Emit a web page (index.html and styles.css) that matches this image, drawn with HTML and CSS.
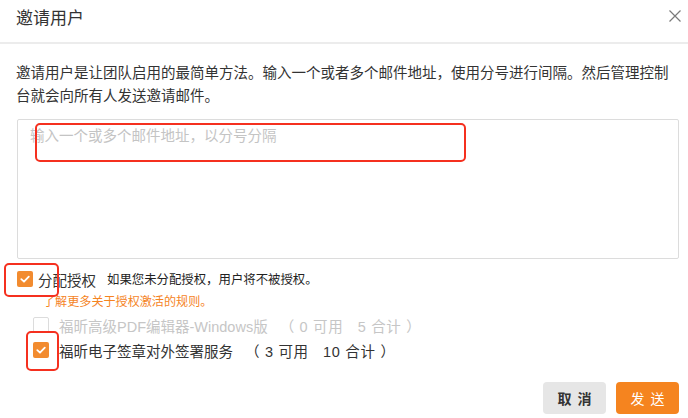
FILE: index.html
```html
<!DOCTYPE html>
<html lang="zh">

<head>
  <meta charset="UTF-8">
  <meta name="viewport" content="width=device-width, initial-scale=1.0">
  <title>邀请用户</title>
  <link rel="stylesheet" href="styles.css">
</head>

<body>
  <div class="dialog">
    <div class="header">
      <h1 class="title">邀请用户</h1>
      <svg class="close" width="12" height="12" viewBox="0 0 12 12">
        <path d="M0.5 0.5 L11.5 11.5 M11.5 0.5 L0.5 11.5" stroke="#7a7a7a" stroke-width="1.2" fill="none" />
      </svg>
    </div>

    <p class="desc">邀请用户是让团队启用的最简单方法。输入一个或者多个邮件地址，使用分号进行间隔。然后管理控制台就会向所有人发送邀请邮件。</p>

    <div class="email-box">
      <textarea class="emails" placeholder="输入一个或多个邮件地址，以分号分隔"></textarea>
      <span class="mark mark-input"></span>
    </div>

    <div class="assign">
      <span class="check on">
        <svg width="16" height="16" viewBox="0 0 16 16"><path d="M4.3 8.2 L7 10.7 L11.8 5.6" stroke="#fff" stroke-width="1.8" fill="none" stroke-linecap="round" stroke-linejoin="round" /></svg>
      </span>
      <span class="assign-label">分配授权</span>
      <span class="assign-note">如果您未分配授权，用户将不被授权。</span>
      <span class="mark mark-assign"></span>
    </div>
    <a class="rules" href="#">了解更多关于授权激活的规则。</a>

    <div class="product disabled">
      <span class="check off"></span>
      <span class="product-name">福昕高级PDF编辑器-Windows版</span>
      <span class="product-count">（ 0 可用 &nbsp; 5 合计 ）</span>
    </div>
    <div class="product">
      <span class="check on">
        <svg width="16" height="16" viewBox="0 0 16 16"><path d="M4.3 8.2 L7 10.7 L11.8 5.6" stroke="#fff" stroke-width="1.8" fill="none" stroke-linecap="round" stroke-linejoin="round" /></svg>
      </span>
      <span class="product-name">福昕电子签章对外签署服务</span>
      <span class="product-count">（ 3 可用 &nbsp; 10 合计 ）</span>
      <span class="mark mark-product"></span>
    </div>

    <div class="footer">
      <button class="btn cancel" type="button">取消</button>
      <button class="btn send" type="button">发送</button>
    </div>
  </div>
</body>

</html>
```

FILE: styles.css
```css
* {
  margin: 0;
  padding: 0;
  box-sizing: border-box;
}

body {
  background-color: #fff;
  font-family: "Liberation Sans", "Noto Sans CJK SC", sans-serif;
  color: #333;
}

.dialog {
  width: 688px;
  height: 418px;
  overflow: hidden;
}

.header {
  height: 44px;
  border-bottom: 2px solid #ececec;
  display: flex;
  justify-content: space-between;
  align-items: flex-start;
  padding: 8px 7px 0 16px;
}

.title {
  font-size: 17px;
  font-weight: normal;
  line-height: 22px;
  color: #333;
}

.close {
  margin-top: 2px;
}

.desc {
  margin-top: 18px;
  padding: 0 12px 0 16px;
  font-size: 14.5px;
  line-height: 23px;
  color: #333;
}

.email-box {
  position: relative;
  margin: 11px 0 0 17px;
  width: 662px;
  height: 140px;
}

.emails {
  display: block;
  width: 100%;
  height: 100%;
  border: 1px solid #dcdcdc;
  border-radius: 2px;
  padding: 6px 12px;
  font-family: "Liberation Sans", "Noto Sans CJK SC", sans-serif;
  font-size: 14.5px;
  line-height: 20px;
  resize: none;
  outline: none;
}

.emails::placeholder {
  color: #c4c4c4;
}

/* red annotation boxes */
.mark {
  position: absolute;
  border: 2.5px solid #f5301f;
  border-radius: 5px;
}

.mark-input {
  left: 18px;
  top: 4px;
  width: 431px;
  height: 39px;
}

.mark-assign {
  left: -13px;
  top: -8px;
  width: 55px;
  height: 34px;
}

.mark-product {
  left: -7px;
  top: -11px;
  width: 33px;
  height: 40px;
}

.check {
  flex: none;
  width: 16px;
  height: 16px;
  border-radius: 2px;
}

.check svg {
  display: block;
}

.check.on {
  background-color: #f28b2f;
}

.check.off {
  border: 1px solid #dcdcdc;
  background-color: #fff;
}

.assign {
  position: relative;
  display: flex;
  align-items: center;
  margin: 12px 0 0 17px;
  height: 16px;
}

.assign-label {
  margin-left: 5px;
  font-size: 14.5px;
  color: #333;
}

.assign-note {
  margin-left: 11px;
  font-size: 12.4px;
  color: #222;
}

.rules {
  display: block;
  margin: 7px 0 0 43px;
  font-size: 12.1px;
  line-height: 16px;
  color: #f5841f;
  text-decoration: none;
}

.product {
  position: relative;
  display: flex;
  align-items: center;
  margin: 7px 0 0 33px;
  height: 16px;
  font-size: 14.5px;
  color: #333;
}

.product + .product {
  margin-top: 9px;
}

.product.disabled {
  color: #c6c6c6;
}

.product-name {
  margin-left: 10px;
}

.product-count {
  margin-left: 12px;
  letter-spacing: 0.7px;
}

.footer {
  display: flex;
  justify-content: flex-end;
  gap: 10px;
  margin-top: 24px;
  padding-right: 9px;
}

.btn {
  width: 63px;
  height: 32px;
  border: none;
  border-radius: 4px;
  font-family: "Liberation Sans", "Noto Sans CJK SC", sans-serif;
  font-size: 14px;
  letter-spacing: 6px;
  text-indent: 6px;
}

.cancel {
  background-color: #e6e6e6;
  color: #333;
  font-weight: bold;
}

.send {
  background-color: #f5841f;
  color: #fff;
}
```
